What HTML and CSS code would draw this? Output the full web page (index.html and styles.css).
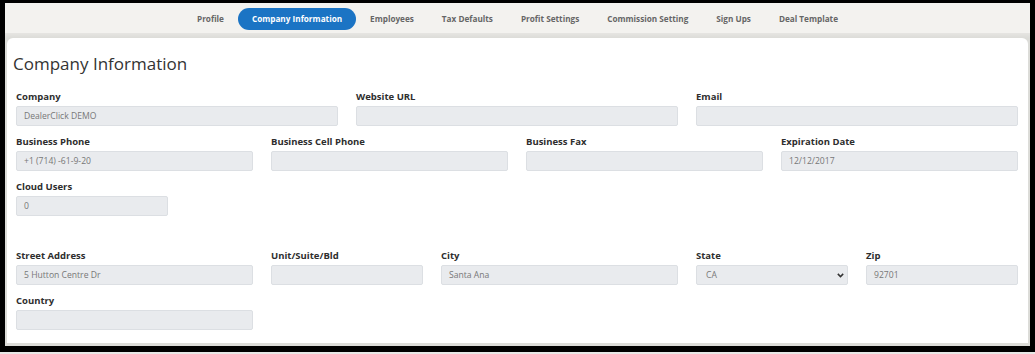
FILE: index.html
```html
<!DOCTYPE html>
<html>
<head>
<meta charset="utf-8">
<link rel="stylesheet" href="styles.css">
</head>
<body>
<div class="frame">
  <nav class="tabs">
    <span class="tab">Profile</span>
    <span class="tab active">Company Information</span>
    <span class="tab">Employees</span>
    <span class="tab">Tax Defaults</span>
    <span class="tab">Profit Settings</span>
    <span class="tab">Commission Setting</span>
    <span class="tab">Sign Ups</span>
    <span class="tab">Deal Template</span>
  </nav>
  <div class="shade"></div>
  <section class="card">
    <h1 class="title">Company Information</h1>
    <div class="grid">
      <div class="field c4"><label>Company</label><div class="input">DealerClick DEMO</div></div>
      <div class="field c4"><label>Website URL</label><div class="input"></div></div>
      <div class="field c4"><label>Email</label><div class="input"></div></div>

      <div class="field c3"><label>Business Phone</label><div class="input">+1 (714) -61-9-20</div></div>
      <div class="field c3"><label>Business Cell Phone</label><div class="input"></div></div>
      <div class="field c3"><label>Business Fax</label><div class="input"></div></div>
      <div class="field c3"><label>Expiration Date</label><div class="input">12/12/2017</div></div>

      <div class="field c2"><label>Cloud Users</label><div class="input">0</div></div>
      <div class="spacer"></div>

      <div class="field c3"><label>Street Address</label><div class="input">5 Hutton Centre Dr</div></div>
      <div class="field c2"><label>Unit/Suite/Bld</label><div class="input"></div></div>
      <div class="field c3"><label>City</label><div class="input">Santa Ana</div></div>
      <div class="field c2"><label>State</label><div class="input select"><span>CA</span><svg class="chev" width="7" height="5" viewBox="0 0 7 5"><path d="M0.8 0.9 L3.5 3.6 L6.2 0.9" fill="none" stroke="#333" stroke-width="1.5"/></svg></div></div>
      <div class="field c2"><label>Zip</label><div class="input">92701</div></div>

      <div class="field c3"><label>Country</label><div class="input"></div></div>
    </div>
  </section>
</div>
<div class="foot"></div>
</body>
</html>
```

FILE: styles.css
```css
html, body {
  margin: 0;
  padding: 0;
  background: #000;
  width: 1035px;
  height: 354px;
  overflow: hidden;
}
body {
  font-family: "Open Sans", "Liberation Sans", sans-serif;
  color: #333;
}
.frame {
  margin: 3px 0 0 5px;
  width: 1025px;
  height: 343px;
  background: #dcdcd8;
  display: flex;
  flex-direction: column;
}
.tabs {
  height: 30px;
  box-sizing: border-box;
  padding-top: 5px;
  background: #f3f2ef;
  display: flex;
  justify-content: center;
  align-items: flex-start;
}
.tab {
  height: 22px;
  line-height: 21px;
  padding: 0 14px;
  font-size: 8.2px;
  font-weight: 700;
  color: #666;
  border-radius: 11px;
  white-space: nowrap;
}
.tab.active {
  background: #1b74c4;
  color: #fff;
}
.shade {
  height: 5px;
  background: linear-gradient(#e6e5e2, #dcdcd8);
}
.card {
  margin: 0 2px;
  height: 305px;
  background: #fff;
  border-radius: 6px 6px 0 0;
  box-sizing: border-box;
  padding: 16px 10px 0 9px;
}
.title {
  margin: 0 0 16px -3px;
  font-size: 17px;
  line-height: 20px;
  font-weight: 400;
  color: #333;
}
.grid {
  display: grid;
  grid-template-columns: repeat(12, 1fr);
  column-gap: 18px;
}
.c2 { grid-column: span 2; }
.c3 { grid-column: span 3; }
.c4 { grid-column: span 4; }
.spacer { grid-column: 1 / -1; height: 24px; }
.field {
  display: flex;
  flex-direction: column;
  margin-bottom: 9px;
}
.field label {
  font-size: 9.5px;
  font-weight: 700;
  line-height: 13px;
  margin-bottom: 3px;
  color: #2e2e2e;
}
.input {
  height: 20px;
  box-sizing: border-box;
  background: #e9ebee;
  border: 1px solid #dcdfe3;
  border-radius: 2px;
  padding: 0 7px;
  font-size: 8.6px;
  line-height: 18px;
  color: #777;
  display: flex;
  align-items: center;
}
.select {
  justify-content: space-between;
  padding: 0 3px 0 9px;
}
.chev { display: block; }
.foot {
  position: absolute;
  left: 0;
  top: 352px;
  width: 1035px;
  height: 2px;
  background: #e8e8e6;
}
```
